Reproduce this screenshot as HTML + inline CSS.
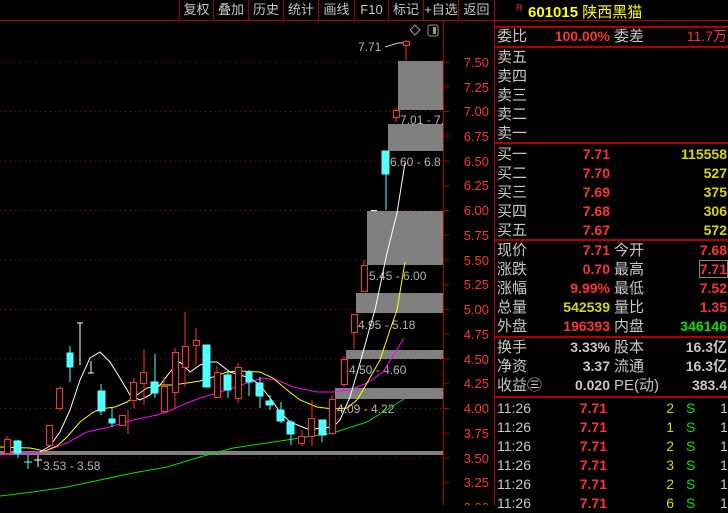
<!DOCTYPE html>
<html><head><meta charset="utf-8"><style>
*{margin:0;padding:0;box-sizing:border-box}
body{width:728px;height:505px;background:#000;overflow:hidden;position:relative;font-family:"Liberation Sans","Noto Sans CJK SC",sans-serif;color:#c8c8c8}
.t{position:absolute;white-space:nowrap;line-height:19px;font-size:14px}
.l{font-size:15px;color:#c8c8c8}
.r{text-align:right}
.red{color:#ff3232}.yel{color:#d8d800}.grn{color:#00e600}.gry{color:#c8c8c8}
.hl{position:absolute;left:494px;width:234px;height:2px;background:#b00000}
.btn{position:absolute;top:0;height:20px;line-height:20px;font-size:13px;color:#c8c8c8;text-align:center;border-left:1px solid #a00000}
</style></head><body>
<svg width="728" height="505" style="position:absolute;left:0;top:0">
<g stroke="#a00000" stroke-width="1" stroke-dasharray="1,4">
<line x1="0" y1="62" x2="443" y2="62"/><line x1="0" y1="111.5" x2="443" y2="111.5"/><line x1="0" y1="161" x2="443" y2="161"/><line x1="0" y1="210.5" x2="443" y2="210.5"/><line x1="0" y1="260" x2="443" y2="260"/><line x1="0" y1="309.5" x2="443" y2="309.5"/><line x1="0" y1="359" x2="443" y2="359"/><line x1="0" y1="408.5" x2="443" y2="408.5"/><line x1="0" y1="458" x2="443" y2="458"/>
</g>
<line x1="0" y1="20.5" x2="728" y2="20.5" stroke="#b00000"/>
<line x1="443.5" y1="21" x2="443.5" y2="505" stroke="#b00000"/>
<line x1="494.5" y1="0" x2="494.5" y2="505" stroke="#b00000"/>
<g stroke="#b00000"><line x1="444" y1="86.7" x2="449" y2="86.7"/><line x1="444" y1="136" x2="449" y2="136"/><line x1="444" y1="185.7" x2="449" y2="185.7"/><line x1="444" y1="235" x2="449" y2="235"/><line x1="444" y1="284.7" x2="449" y2="284.7"/><line x1="444" y1="334" x2="449" y2="334"/><line x1="444" y1="383.7" x2="449" y2="383.7"/><line x1="444" y1="433" x2="449" y2="433"/><line x1="444" y1="482.7" x2="449" y2="482.7"/>
<line x1="444" y1="62" x2="449" y2="62"/><line x1="444" y1="111.5" x2="449" y2="111.5"/><line x1="444" y1="161" x2="449" y2="161"/><line x1="444" y1="210.5" x2="449" y2="210.5"/><line x1="444" y1="260" x2="449" y2="260"/><line x1="444" y1="309.5" x2="449" y2="309.5"/><line x1="444" y1="359" x2="449" y2="359"/><line x1="444" y1="408.5" x2="449" y2="408.5"/><line x1="444" y1="458" x2="449" y2="458"/></g>
<g fill="#808080">
<rect x="398" y="61" width="45" height="49"/><rect x="388" y="124" width="55" height="27"/><rect x="367" y="211" width="76" height="54"/><rect x="356" y="293" width="87" height="20"/><rect x="346" y="350" width="97" height="9"/><rect x="335" y="388" width="108" height="11"/><rect x="0" y="451" width="443" height="4"/>
</g>
<g font-family="Liberation Sans" font-size="12" fill="#b4b4b4">
<text x="400" y="124">7.01 - 7.</text><text x="390" y="166">6.60 - 6.8</text><text x="369" y="280">5.45 - 6.00</text><text x="358" y="329">4.95 - 5.18</text><text x="349" y="374">4.50 - 4.60</text><text x="337" y="413">4.09 - 4.22</text><text x="43" y="470">3.53 - 3.58</text><text x="358" y="51">7.71</text>
</g>
<polyline points="385,47 398,43 403,43" fill="none" stroke="#ccc"/>
<path d="M415 25 L420 30 L415 35 L410 30Z" fill="none" stroke="#999"/>
<rect x="428" y="25" width="10" height="11" rx="2" fill="none" stroke="#999"/><rect x="433" y="27" width="3" height="7" fill="#999"/>
<g font-family="Liberation Sans" font-size="13" fill="#ff3232" text-anchor="end">
<text x="489" y="67">7.50</text><text x="489" y="92">7.25</text><text x="489" y="116">7.00</text><text x="489" y="141">6.75</text><text x="489" y="166">6.50</text><text x="489" y="190">6.25</text><text x="489" y="215">6.00</text><text x="489" y="240">5.75</text><text x="489" y="265">5.50</text><text x="489" y="289">5.25</text><text x="489" y="314">5.00</text><text x="489" y="339">4.75</text><text x="489" y="364">4.50</text><text x="489" y="388">4.25</text><text x="489" y="413">4.00</text><text x="489" y="438">3.75</text><text x="489" y="463">3.50</text><text x="489" y="487">3.25</text><text x="489" y="512">3.00</text>
</g>
<g fill="none" stroke-width="1">
<polyline stroke="#00e000" points="0,496 33,492 67,487 100,480 133,473 167,467 200,457 233,448 267,443 300,438 333,433 367,422 404,399"/>
<polyline stroke="#ff00ff" points="0,455 20,453 43,452 67,443 87,432 110,427 133,420 157,415 167,412 187,403 200,398 217,393 233,388 250,382 263,378 277,380 293,387 317,392 333,392 350,390 367,383 383,372 404,338"/>
<polyline stroke="#ffff00" points="0,447 30,448 45,451 57,446 67,437 80,422 92,413 100,409 115,407 127,402 137,395 147,388 160,385 173,385 187,383 200,381 213,377 227,372 240,371 260,372 273,378 287,390 300,400 317,407 333,409 347,408 357,400 363,390 380,360 390,330 397,310 405,262"/>
<polyline stroke="#ffffff" points="40,452 50,446 60,432 70,410 80,380 90,358 100,352 110,362 120,378 130,395 140,400 150,395 160,385 170,372 180,362 190,372 200,365 210,362 217,362 230,372 240,375 250,378 260,385 270,398 280,412 290,422 310,430 320,428 333,427 340,420 350,397 360,363 370,327 375,310 387,253 397,213 405,163"/>
</g>
<g stroke="#ff3232" fill="none">
<path d="M7 436v18M60 386v25M128 410v24M134 378v30M144 349v56M164 377v36M175 348v60M185 312v75M196 328v37M217 366v32M238 363v40M302 430v16M312 400v46M332 395v40M344 356v31M354 314v35M364 260v32M396 108v14M406 40v20"/>
</g>
<g stroke="#ff3232" fill="#000">
<rect x="4.5" y="439.5" width="6" height="14"/><rect x="46.5" y="425.5" width="6" height="20"/><rect x="56.5" y="388.5" width="6" height="20"/><rect x="119.5" y="415.5" width="6" height="10"/><rect x="130.5" y="382.5" width="6" height="18"/><rect x="140.5" y="372.5" width="6" height="11"/><rect x="161.5" y="386.5" width="6" height="25"/><rect x="172.5" y="352.5" width="6" height="40"/><rect x="182.5" y="346.5" width="6" height="21"/><rect x="193.5" y="340.5" width="6" height="5"/><rect x="214.5" y="372.5" width="6" height="25"/><rect x="235.5" y="367.5" width="6" height="31"/><rect x="298.5" y="436.5" width="6" height="7"/><rect x="308.5" y="418.5" width="6" height="18"/><rect x="329.5" y="399.5" width="6" height="34"/><rect x="341.5" y="359.5" width="6" height="25"/><rect x="351.5" y="314.5" width="6" height="18"/><rect x="361.5" y="265.5" width="6" height="26"/><rect x="393.5" y="110.5" width="6" height="7"/><rect x="403.5" y="41.5" width="6" height="4"/>
</g>
<g stroke="#54ffff" fill="#54ffff">
<path d="M18 440v18M70 346v36M101 384v31M112 408v19M155 354v44M228 370v28M249 370v26M260 377v31M270 395v15M281 402v21M291 420v25M322 420v22M386 151v59M28 455v14M24 462h8" fill="none"/>
<rect x="14" y="441" width="7" height="12"/><rect x="67" y="353" width="6" height="14"/><rect x="98" y="391" width="7" height="20"/><rect x="109" y="419" width="6" height="4"/><rect x="151" y="382" width="7" height="11"/><rect x="203" y="345" width="7" height="42"/><rect x="224" y="375" width="7" height="15"/><rect x="246" y="372" width="6" height="10"/><rect x="256" y="383" width="7" height="13"/><rect x="266" y="401" width="7" height="4"/><rect x="277" y="410" width="7" height="11"/><rect x="287" y="422" width="7" height="12"/><rect x="319" y="420" width="7" height="15"/><rect x="382" y="151" width="7" height="23"/>
</g>
<g stroke="#fff" fill="none"><path d="M80 323v42M77 323h6M91 361v12M88 373h6M38 455v12M34 460h8M371 210.5h6"/></g>
</svg>
<div class="btn" style="left:179px;width:34px">复权</div><div class="btn" style="left:213px;width:35px">叠加</div><div class="btn" style="left:248px;width:35px">历史</div><div class="btn" style="left:283px;width:35px">统计</div><div class="btn" style="left:318px;width:36px">画线</div><div class="btn" style="left:354px;width:34px">F10</div><div class="btn" style="left:388px;width:35px">标记</div><div class="btn" style="left:423px;width:35px">+自选</div><div class="btn" style="left:458px;width:36px">返回</div>
<div class="t" style="left:516px;top:3px;font-size:9px;line-height:10px;color:#ff3232">R</div>
<div class="t yel" style="left:528px;top:3px;font-size:15px;color:#ffff00"><b>601015</b> 陕西黑猫</div>
<div class="hl" style="top:26px"></div><div class="hl" style="top:46px"></div><div class="hl" style="top:142px"></div><div class="hl" style="top:239px"></div><div class="hl" style="top:336px"></div><div class="hl" style="top:396px"></div>
<div class="t l" style="left:497px;top:27px">委比</div><div class="t red r" style="left:540px;width:70px;top:27px"><b>100.00%</b></div><div class="t l" style="left:614px;top:27px">委差</div><div class="t red r" style="left:650px;width:77px;top:27px">11.7万</div>
<div class="t l" style="left:497px;top:48px;line-height:19px">卖五<br>卖四<br>卖三<br>卖二<br>卖一</div>
<div class="t l" style="left:497px;top:145px">买一<br>买二<br>买三<br>买四<br>买五</div>
<div class="t red r" style="left:560px;width:50px;top:145px"><b>7.71<br>7.70<br>7.69<br>7.68<br>7.67</b></div>
<div class="t yel r" style="left:640px;width:87px;top:145px"><b>115558<br>527<br>375<br>306<br>572</b></div>
<div class="t l" style="left:497px;top:241px">现价<br>涨跌<br>涨幅<br>总量<br>外盘</div>
<div class="t r" style="left:530px;width:80px;top:241px"><b><span class="red">7.71</span><br><span class="red">0.70</span><br><span class="red">9.99%</span><br><span class="yel">542539</span><br><span class="red">196393</span></b></div>
<div class="t l" style="left:614px;top:241px">今开<br>最高<br>最低<br>量比<br>内盘</div>
<div class="t r" style="left:650px;width:77px;top:241px"><b><span class="red">7.68</span><br><span class="red" style="outline:1px solid #888">7.71</span><br><span class="red">7.52</span><br><span class="red">1.35</span><br><span class="grn">346146</span></b></div>
<div class="t l" style="left:497px;top:338px">换手<br>净资<br>收益㊂</div>
<div class="t r gry" style="left:530px;width:80px;top:338px"><b>3.33%<br>3.37<br>0.020</b></div>
<div class="t l" style="left:614px;top:338px">股本<br>流通<br>PE(动)</div>
<div class="t r gry" style="left:650px;width:77px;top:338px"><b>16.3亿<br>16.3亿<br>383.4</b></div>
<div class="t gry" style="left:497px;top:399px">11:26<br>11:26<br>11:26<br>11:26<br>11:26<br>11:26</div>
<div class="t red r" style="left:560px;width:47px;top:399px"><b>7.71<br>7.71<br>7.71<br>7.71<br>7.71<br>7.71</b></div>
<div class="t yel r" style="left:650px;width:24px;top:399px">2<br>1<br>2<br>3<br>2<br>6</div>
<div class="t grn" style="left:686px;top:399px">S<br>S<br>S<br>S<br>S<br>S</div>
<div class="t gry" style="left:720px;top:399px">1<br>1<br>1<br>1<br>1<br>1</div>
</body></html>
